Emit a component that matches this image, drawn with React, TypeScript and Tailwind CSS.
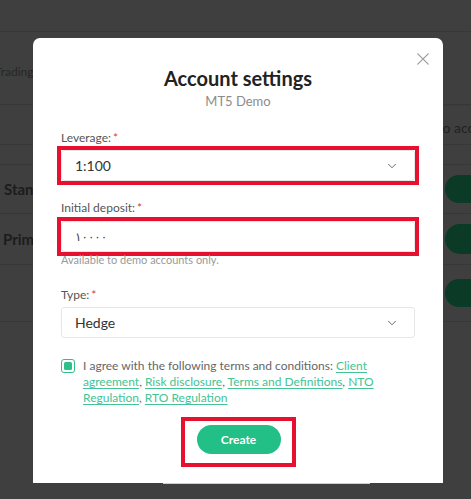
import { ChevronDown } from 'lucide-react';

function CloseIcon() {
    return (
        <svg width="12" height="12" viewBox="0 0 12 12" fill="none" stroke="#9b9b9b" strokeWidth="1.2" strokeLinecap="round">
            <path d="M0.8 0.8 11.2 11.2M11.2 0.8 0.8 11.2" />
        </svg>
    );
}

function Field({ label, children, className = '' }: { label: string; children: React.ReactNode; className?: string }) {
    return (
        <div className={className}>
            <div className="text-[12px] leading-[16px] text-[#555]">
                {label}
                <span className="ml-[2px] text-[#e23a3a]">*</span>
            </div>
            {children}
        </div>
    );
}

export default function App() {
    return (
        <div className="relative h-[499px] w-[471px] overflow-hidden bg-[#3f3f3f] font-['Lato',sans-serif]">
            {/* page behind the dimmed overlay */}
            <div className="flex flex-col">
                <div className="h-[32px] border-b border-[#373737]" />
                <div className="flex h-[73px] items-center border-b border-[#373737] pt-[8px]">
                    <span className="-ml-[5px] text-[12px] text-[#262626]">Trading</span>
                </div>
                <div className="flex h-[40px] justify-end border-b border-[#373737]">
                    <div className="w-[58px] shrink-0 overflow-hidden whitespace-nowrap border-t border-[#1f4a37] pt-[11px] text-[14px] text-[#222]">
                        Demo accounts
                    </div>
                </div>
                <div className="h-[20px] border-b border-[#373737]" />
                <div className="flex h-[49px] items-center justify-between border-b border-[#373737]">
                    <span className="ml-[4px] text-[15px] font-bold text-[#1c1c1c]">Standard</span>
                    <div className="mr-[-40px] h-[28px] w-[66px] rounded-full bg-[#0b3a27]" />
                </div>
                <div className="flex h-[51px] items-center justify-between border-b border-[#373737]">
                    <span className="ml-[3px] text-[15px] font-bold text-[#1c1c1c]">Prime</span>
                    <div className="mr-[-40px] h-[30px] w-[66px] rounded-full bg-[#0b3a27]" />
                </div>
                <div className="flex h-[57px] items-center justify-end border-b border-[#373737]">
                    <div className="mr-[-40px] h-[28px] w-[66px] rounded-full bg-[#0b3a27]" />
                </div>
                <div className="h-[159px]" />
                <div className="flex items-start">
                    <div className="ml-[163px] h-[3px] w-[207px] bg-[#cfcfcf]" />
                    <div className="ml-[43px] h-[2px] w-[15px] bg-[#d9a520]" />
                </div>
            </div>

            {/* modal */}
            <div className="absolute left-[33px] top-[38px] flex h-[445px] w-[410px] flex-col rounded-t-[7px] bg-white px-[28px] pt-[26px]">
                <button className="absolute right-[14px] top-[15px]">
                    <CloseIcon />
                </button>
                <h2 className="text-center text-[20px] font-bold leading-[28px] text-[#222]">Account settings</h2>
                <p className="text-center text-[13px] leading-[18px] text-[#8c8c8c]">MT5 Demo</p>

                <Field label="Leverage:" className="mt-[20px]">
                    <div className="-mx-[4px] -mb-[4px] mt-0 border-4 border-[#e5112f]">
                        <div className="flex h-[31px] items-center justify-between rounded-[3px] border border-[#e6e6e6] pl-[13px] pr-[15px]">
                            <span className="text-[14px] text-[#333]">1:100</span>
                            <ChevronDown size={14} strokeWidth={1.5} color="#555" />
                        </div>
                    </div>
                </Field>

                <Field label="Initial deposit:" className="mt-[19px]">
                    <div className="-mx-[4px] -mb-[4px] mt-[1px] border-4 border-[#e5112f]">
                        <div className="flex h-[31px] items-center rounded-[3px] border border-[#e6e6e6] pl-[13px]">
                            <span className="font-['DejaVu_Sans',sans-serif] text-[12px] text-[#444]">١٠٠٠٠</span>
                        </div>
                    </div>
                </Field>
                <p className="mt-[1px] text-[11px] leading-[14px] text-[#9a9a9a]">Available to demo accounts only.</p>

                <Field label="Type:" className="mt-[20px]">
                    <div className="mt-[4px] flex h-[31px] items-center justify-between rounded-[3px] border border-[#e6e6e6] pl-[13px] pr-[15px]">
                        <span className="text-[14px] text-[#333]">Hedge</span>
                        <ChevronDown size={14} strokeWidth={1.5} color="#555" />
                    </div>
                </Field>

                <div className="mt-[20px] flex items-start gap-[8px]">
                    <div className="mt-[1px] flex h-[14px] w-[14px] shrink-0 items-center justify-center rounded-[3px] border-[1.5px] border-[#2fbf8a]">
                        <div className="h-[8px] w-[8px] rounded-[1.5px] bg-[#2fbf8a]" />
                    </div>
                    <p className="w-[300px] text-[12px] leading-[16px] text-[#666]">
                        I agree with the following terms and conditions:{' '}
                        <a className="text-[#44c394] underline underline-offset-2">Client agreement</a>,{' '}
                        <a className="text-[#44c394] underline underline-offset-2">Risk disclosure</a>,{' '}
                        <a className="text-[#44c394] underline underline-offset-2">Terms and Definitions</a>,{' '}
                        <a className="text-[#44c394] underline underline-offset-2">NTO Regulation</a>,{' '}
                        <a className="text-[#44c394] underline underline-offset-2">RTO Regulation</a>
                    </p>
                </div>

                <div className="mt-[11px] self-center border-4 border-[#e5112f] pb-[9px] pl-[12px] pr-[11px] pt-[4px]">
                    <button className="h-[29px] w-[84px] rounded-full bg-[#22bf87] text-[12px] font-bold text-white">
                        Create
                    </button>
                </div>
            </div>
        </div>
    );
}
